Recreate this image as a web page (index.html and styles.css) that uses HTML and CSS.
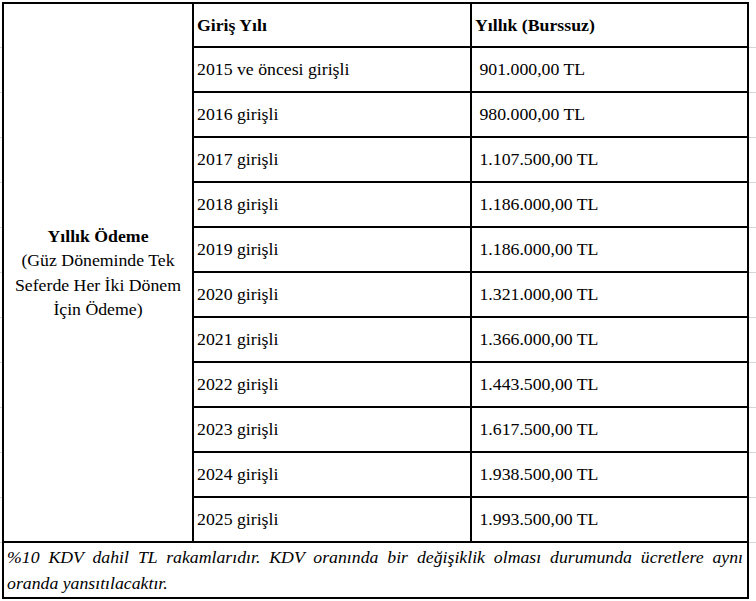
FILE: index.html
```html
<!DOCTYPE html>
<html lang="tr">
<head>
<meta charset="utf-8">
<title>Yıllık Ödeme</title>
<link rel="stylesheet" href="styles.css">
</head>
<body>
<table class="fees">
  <tr class="head-row">
    <td class="label-cell" rowspan="12">
      <strong>Yıllık Ödeme</strong><br>(Güz Döneminde Tek Seferde Her İki Dönem İçin Ödeme)
    </td>
    <td class="col-year"><strong>Giriş Yılı</strong></td>
    <td class="col-fee"><strong>Yıllık (Burssuz)</strong></td>
  </tr>
  <tr class="data-row"><td>2015 ve öncesi girişli</td><td>&nbsp;901.000,00 TL</td></tr>
  <tr class="data-row"><td>2016 girişli</td><td>&nbsp;980.000,00 TL</td></tr>
  <tr class="data-row"><td>2017 girişli</td><td>&nbsp;1.107.500,00 TL</td></tr>
  <tr class="data-row"><td>2018 girişli</td><td>&nbsp;1.186.000,00 TL</td></tr>
  <tr class="data-row"><td>2019 girişli</td><td>&nbsp;1.186.000,00 TL</td></tr>
  <tr class="data-row"><td>2020 girişli</td><td>&nbsp;1.321.000,00 TL</td></tr>
  <tr class="data-row"><td>2021 girişli</td><td>&nbsp;1.366.000,00 TL</td></tr>
  <tr class="data-row"><td>2022 girişli</td><td>&nbsp;1.443.500,00 TL</td></tr>
  <tr class="data-row"><td>2023 girişli</td><td>&nbsp;1.617.500,00 TL</td></tr>
  <tr class="data-row"><td>2024 girişli</td><td>&nbsp;1.938.500,00 TL</td></tr>
  <tr class="data-row"><td>2025 girişli</td><td>&nbsp;1.993.500,00 TL</td></tr>
  <tr class="note-row">
    <td colspan="3" class="note">%10 KDV dahil TL rakamlarıdır. KDV oranında bir değişiklik olması durumunda ücretlere aynı oranda yansıtılacaktır.</td>
  </tr>
</table>
</body>
</html>
```
FILE: styles.css
```css
html, body {
  margin: 0;
  padding: 0;
  background-color: #ffffff;
}
body {
  padding: 2px 0 0 2px;
  font-family: "Liberation Serif", "Times New Roman", serif;
  font-size: 17.75px;
  color: #000000;
  background-image: repeating-linear-gradient(to bottom, #d6d6d6 0 1px, transparent 1px 45px);
  background-position: 0 47px;
  background-size: 100% 496px;
  background-repeat: repeat-x;
  min-height: 601px;
  box-sizing: border-box;
}
.fees {
  width: 747px;
  table-layout: fixed;
  border-collapse: separate;
  border-spacing: 0;
  border-top: 2px solid #000;
  border-left: 2px solid #000;
  background: #ffffff;
  font-family: "Liberation Serif", "Times New Roman", serif;
}
.fees td {
  box-sizing: border-box;
  border-right: 2px solid #000;
  border-bottom: 2px solid #000;
  padding: 0 3px;
  vertical-align: middle;
  line-height: normal;
  white-space: nowrap;
}
.fees .label-cell {
  width: 190px;
  text-align: center;
  white-space: normal;
  line-height: 24.33px;
  padding: 0 4px;
}
.fees .col-year { width: 278px; }
.fees .col-fee { width: 277px; }
.head-row td { height: 44px; }
.data-row td { height: 45px; }
.fees .note {
  height: 56px;
  font-style: italic;
  text-align: justify;
  white-space: normal;
  line-height: 26px;
  padding: 0 4px 0 3px;
}
```
